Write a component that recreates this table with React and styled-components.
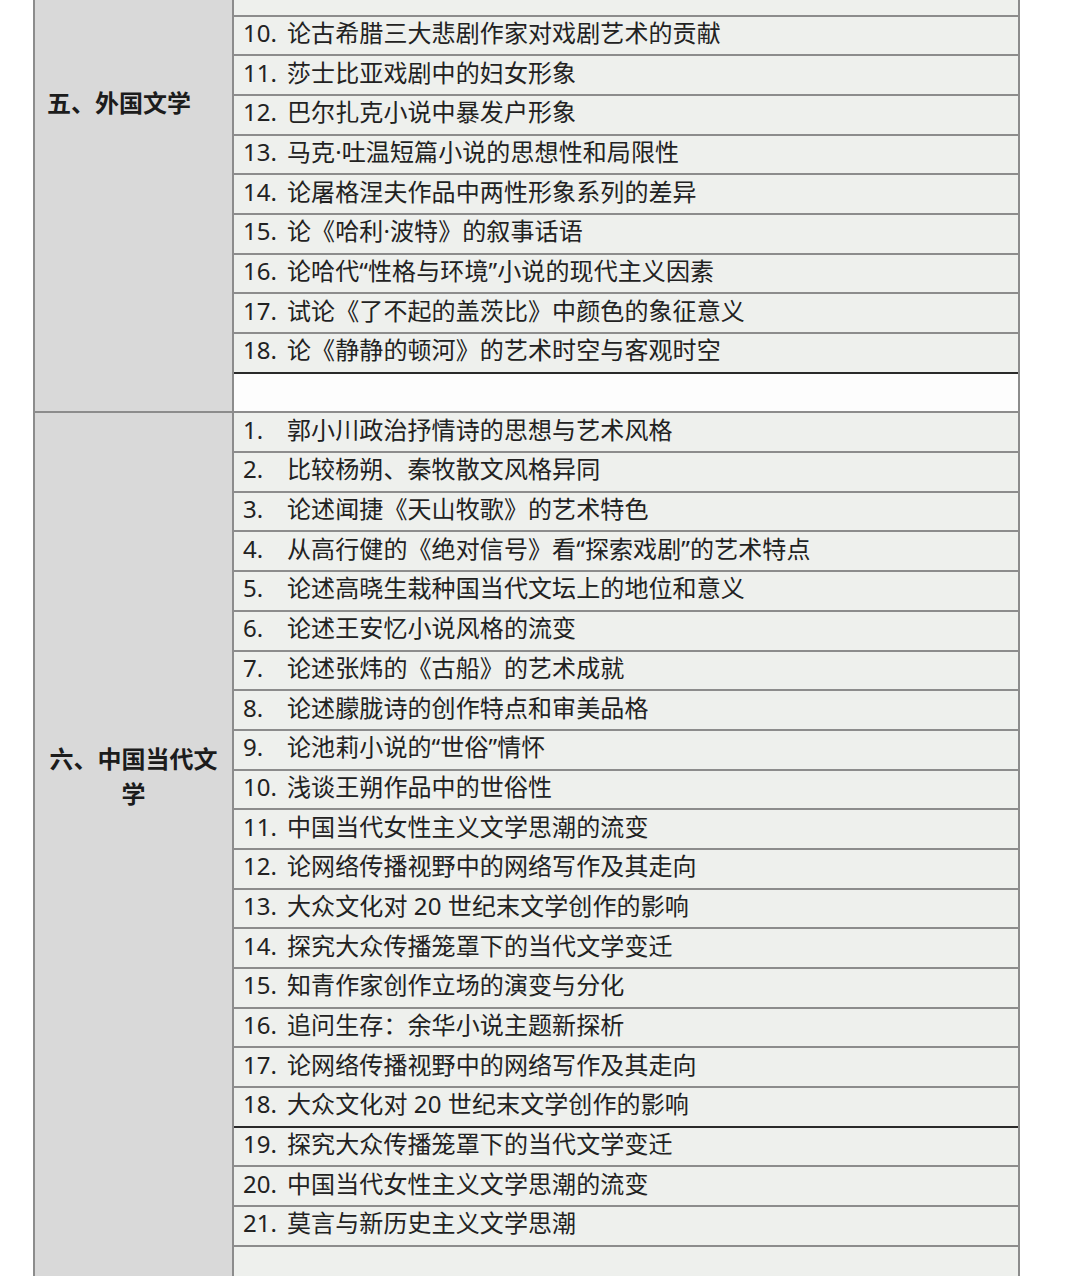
import React from 'react';
import styled, { createGlobalStyle } from 'styled-components';

const GlobalStyle = createGlobalStyle`
  html, body {
    margin: 0;
    padding: 0;
    background: #ffffff;
  }
  body {
    font-family: "Noto Sans CJK SC", "Noto Sans", sans-serif;
    color: #222;
    overflow: hidden;
  }
`;

const Table = styled.div`
  margin-left: 33px;
  width: 987px;
  border-left: 2px solid #8c8c8c;
  border-right: 2px solid #8c8c8c;
  box-sizing: border-box;
`;

const Section = styled.div`
  display: grid;
  grid-template-columns: 199px 1fr;
`;

const LabelCell = styled.div`
  background: #d9d9d9;
  border-right: 2px solid #8c8c8c;
  border-bottom: 2px solid #8c8c8c;
  padding: ${p => p.$top}px 12px 0 12px;
  text-align: ${p => (p.$center ? 'center' : 'left')};
  font-size: 24px;
  font-weight: 700;
  line-height: 35px;
  color: #1c1c1c;
`;

const List = styled.div`
  display: flex;
  flex-direction: column;
`;

const Row = styled.div`
  box-sizing: border-box;
  height: ${p => p.$h || 39.7}px;
  display: flex;
  align-items: center;
  padding: 0 0 5px 9px;
  background: ${p => (p.$white ? '#fdfdfd' : '#eef0ed')};
  border-bottom: 2px solid ${p => (p.$dark ? '#2a2a2a' : '#8c8c8c')};
  font-family: "Noto Sans", "Noto Sans CJK SC", sans-serif;
  font-size: 24px;
  line-height: 30px;
  color: #222;
  white-space: nowrap;
`;

const Num = styled.span`
  width: 44px;
  flex: none;
`;

const Title = styled.span`
  letter-spacing: 0.1px;
`;

const foreign = [
  '论古希腊三大悲剧作家对戏剧艺术的贡献',
  '莎士比亚戏剧中的妇女形象',
  '巴尔扎克小说中暴发户形象',
  '马克·吐温短篇小说的思想性和局限性',
  '论屠格涅夫作品中两性形象系列的差异',
  '论《哈利·波特》的叙事话语',
  '论哈代“性格与环境”小说的现代主义因素',
  '试论《了不起的盖茨比》中颜色的象征意义',
  '论《静静的顿河》的艺术时空与客观时空',
];

const modern = [
  '郭小川政治抒情诗的思想与艺术风格',
  '比较杨朔、秦牧散文风格异同',
  '论述闻捷《天山牧歌》的艺术特色',
  '从高行健的《绝对信号》看“探索戏剧”的艺术特点',
  '论述高晓生栽种国当代文坛上的地位和意义',
  '论述王安忆小说风格的流变',
  '论述张炜的《古船》的艺术成就',
  '论述朦胧诗的创作特点和审美品格',
  '论池莉小说的“世俗”情怀',
  '浅谈王朔作品中的世俗性',
  '中国当代女性主义文学思潮的流变',
  '论网络传播视野中的网络写作及其走向',
  '大众文化对 20 世纪末文学创作的影响',
  '探究大众传播笼罩下的当代文学变迁',
  '知青作家创作立场的演变与分化',
  '追问生存：余华小说主题新探析',
  '论网络传播视野中的网络写作及其走向',
  '大众文化对 20 世纪末文学创作的影响',
  '探究大众传播笼罩下的当代文学变迁',
  '中国当代女性主义文学思潮的流变',
  '莫言与新历史主义文学思潮',
];

export default function App() {
  return (
    <>
      <GlobalStyle />
      <Table>
        <Section>
          <LabelCell $top={84}>五、外国文学</LabelCell>
          <List>
            <Row $h={16.5} />
            {foreign.map((t, i) => (
              <Row key={i} $dark={i === foreign.length - 1}>
                <Num>{i + 10}.</Num>
                <Title>{t}</Title>
              </Row>
            ))}
            <Row $white />
          </List>
        </Section>
        <Section>
          <LabelCell $top={327} $center>
            六、中国当代文学
          </LabelCell>
          <List>
            {modern.map((t, i) => (
              <Row key={i} $dark={i === 17}>
                <Num>{i + 1}.</Num>
                <Title>{t}</Title>
              </Row>
            ))}
            <Row />
          </List>
        </Section>
      </Table>
    </>
  );
}
